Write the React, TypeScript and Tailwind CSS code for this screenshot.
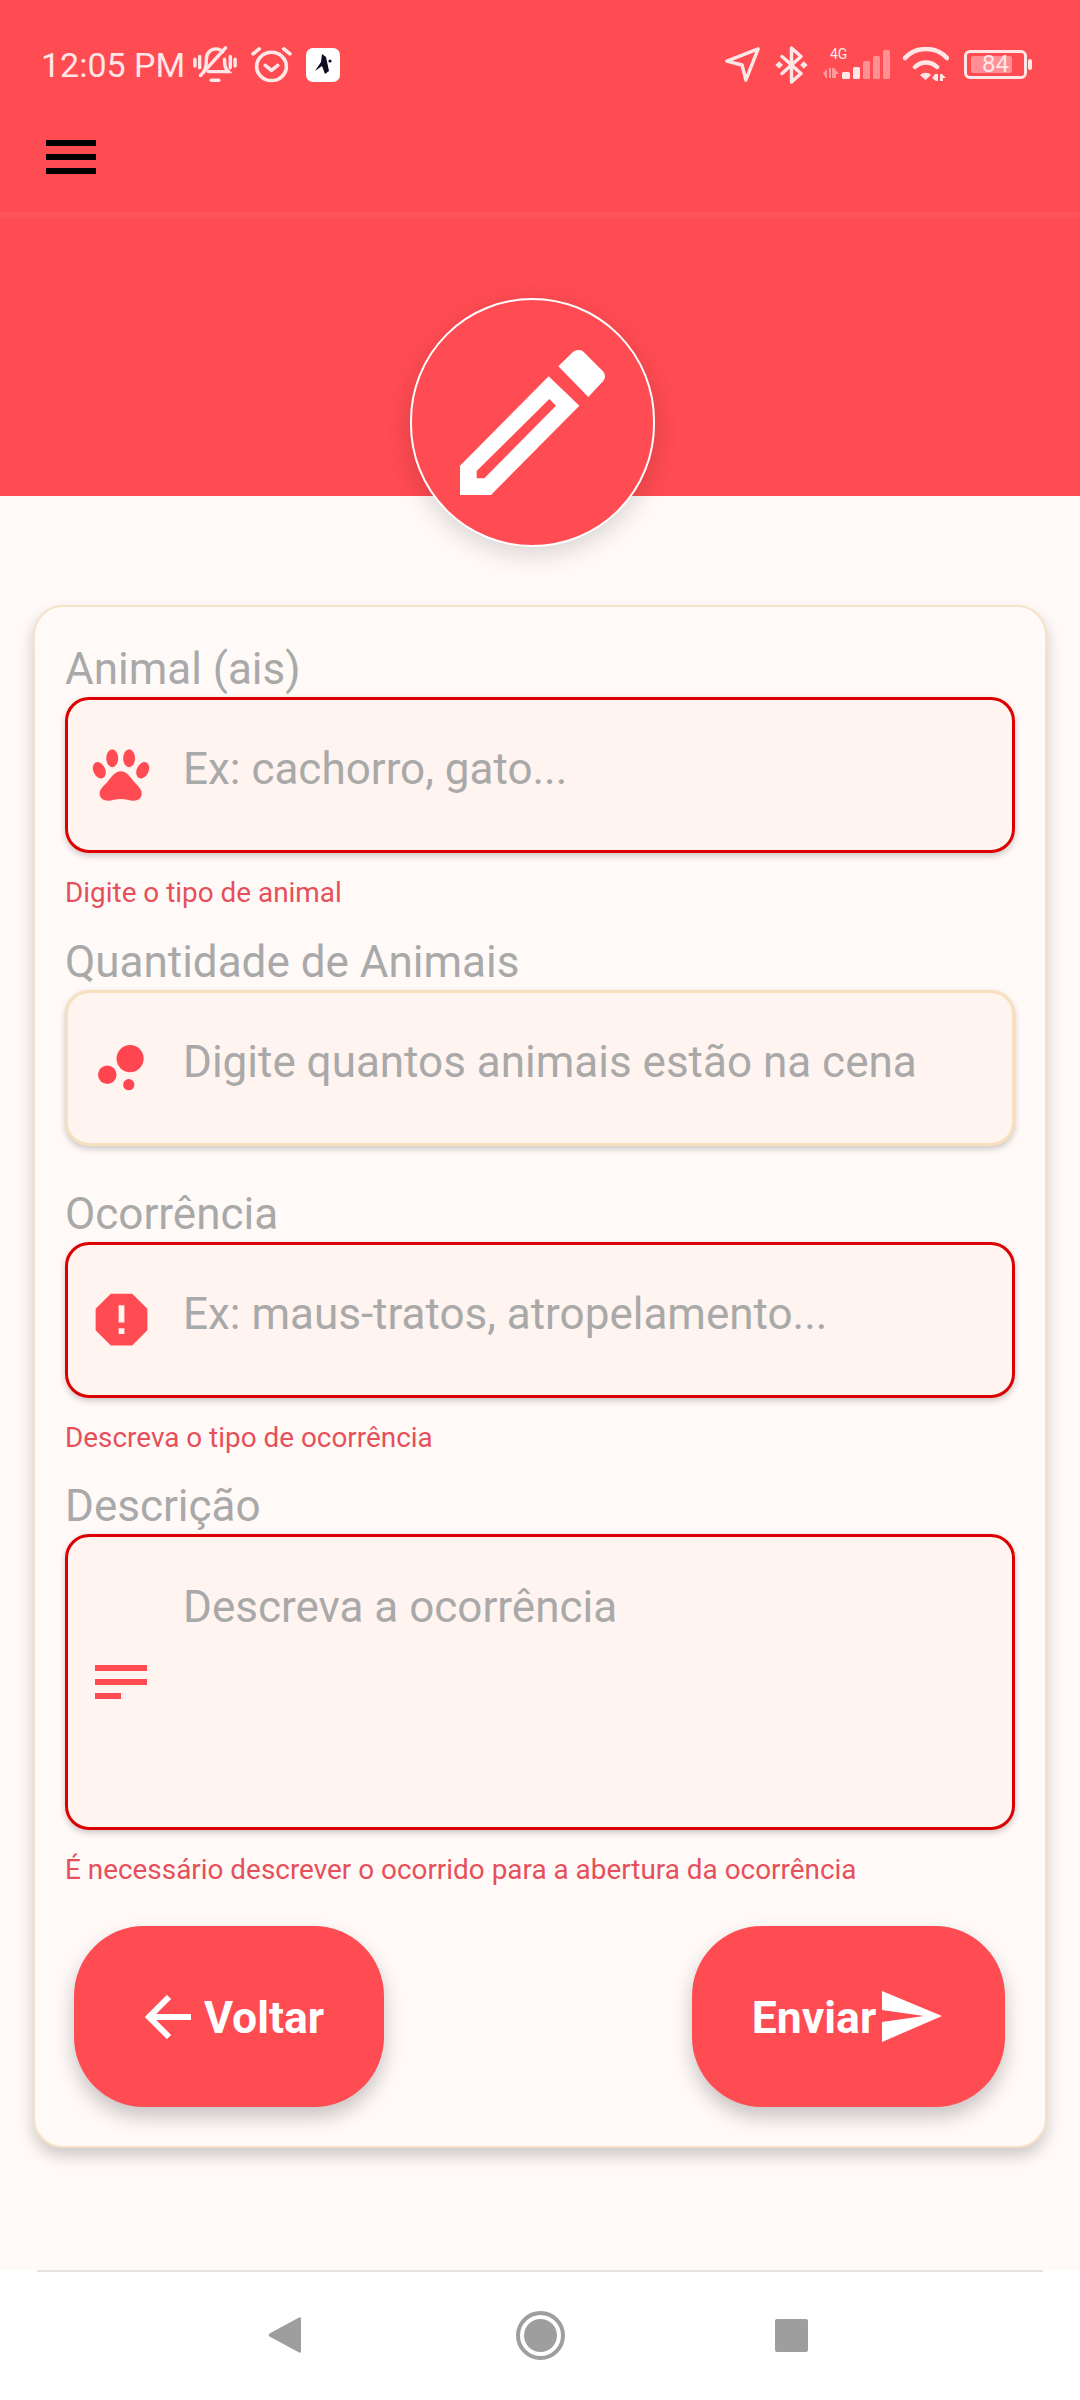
const RED = "#ff4b52";

function StatusBar() {
  return (
    <div className="flex h-[85px] items-center justify-between pl-[41px] pr-[48px] pt-[44px] text-[#ffe6e7]">
      <div className="flex items-center">
        <span className="w-[142px] whitespace-nowrap text-[34px] leading-[40px]">12:05 PM</span>
        <svg width="44" height="38" viewBox="0 0 46 40" className="ml-[10px]" preserveAspectRatio="none" fill="none" stroke="currentColor" strokeWidth="3.6" strokeLinecap="round">
          <path d="M2 14v7M7 11v12M39 11v12M44 14v7" />
          <path d="M11 27c3-3 3-8 3-13 0-6 4-11 10-11 3 0 5 1 7 3M33 14c0 5 0 9 4 13H16" />
          <path d="M34 2 8 31" />
          <path d="M19 36h8" />
        </svg>
        <svg width="41" height="37" viewBox="0 0 40 38" className="ml-[14px]" preserveAspectRatio="none" fill="none" stroke="currentColor" strokeWidth="3.6" strokeLinecap="round" strokeLinejoin="round">
          <circle cx="20" cy="21" r="14.5" />
          <path d="M14 20l6 5 6-5M2 8l6-5M38 8l-6-5" />
        </svg>
        <div className="ml-[14px] flex h-[34px] w-[34px] items-center justify-center rounded-[7px] bg-white">
          <svg width="22" height="24" viewBox="0 0 22 24" fill="#0d0d24">
            <path d="M10 1l4 3 3 14-4 3-3-8-7 5 6-9z" />
            <circle cx="18" cy="8" r="1.6" />
          </svg>
        </div>
      </div>
      <div className="flex items-center">
        <svg width="36" height="36" viewBox="0 0 38 38" fill="none" stroke="currentColor" strokeWidth="3.6" strokeLinejoin="round">
          <path d="M35 2 2 15l16 4 4 16z" />
        </svg>
        <svg width="35" height="38" viewBox="0 0 36 40" className="ml-[13px]" fill="none" stroke="currentColor" strokeWidth="3.6" strokeLinecap="round" strokeLinejoin="round">
          <path d="M8 11l20 18-10 9V2l10 9L8 29" />
          <path d="M1 20l4-4 4 4-4 4zM27 20l4-4 4 4-4 4z" fill="currentColor" stroke="none" />
        </svg>
        <div className="relative ml-[14px] h-[34px] w-[67px]">
          <span className="absolute left-[7px] top-[-1px] text-[14px] leading-[14px]">4G</span>
          <svg width="67" height="34" viewBox="0 0 67 34" fill="currentColor" className="absolute left-0 top-0">
            <path d="M0 25l4-4v9h-1zM6 20h2v10H6zM9 20h2l5 6h-3v4H9z" opacity=".5" />
            <rect x="19" y="24" width="8" height="7" rx="1.500" />
            <rect x="30" y="19" width="7" height="12" rx="1.500" />
            <rect x="40" y="13" width="7" height="18" rx="1.500" opacity=".45" />
            <rect x="50" y="8" width="7" height="23" rx="1.500" opacity=".45" />
            <rect x="60" y="2" width="7" height="29" rx="1.500" opacity=".45" />
          </svg>
        </div>
        <svg width="46" height="35" viewBox="0 0 46 35" className="ml-[13px]" fill="none" stroke="currentColor" strokeWidth="4.500" strokeLinecap="round">
          <path d="M2 11C13-1 33-1 44 11M12 20c6-6 16-6 22 0" />
          <path d="M17 28c4-3 8-3 11 0l-5.500 5zM32 27l3-0v7h-2l-4-3zM37 27h2l4 4h-3v3h-3z" fill="currentColor" stroke="none" />
        </svg>
        <div className="ml-[15px] flex items-center">
          <div className="flex h-[29px] w-[63px] items-center rounded-[6px] border-[3px] border-current px-[4px] py-[3px]">
            <div className="relative h-full w-[41px] rounded-[2px] bg-[#ff8f94]">
              <span className="absolute left-[11px] top-[-4px] text-[24px] leading-[24px]">84</span>
            </div>
          </div>
          <div className="ml-[1px] h-[11px] w-[4px] rounded-full bg-current" />
        </div>
      </div>
    </div>
  );
}

function Field({ label, placeholder, error, icon, tall }: { label: string; placeholder: string; error?: string; icon: React.ReactNode; tall?: boolean }) {
  return (
    <div className="flex flex-col">
      <label className="h-[52px] text-[44px] leading-[49px] text-[#a9a9a9]">{label}</label>
      <div
        className={`flex rounded-[24px] border-[3px] bg-[#fff4ef] shadow-[0_3px_6px_rgba(0,0,0,0.2)] ${
          error ? "border-[#dc0000]" : "border-[#f6e0bd]"
        } ${tall ? "h-[296px]" : "h-[156px]"}`}
      >
        <div className="flex w-[115px] shrink-0 items-center justify-center pr-[9px]">{icon}</div>
        <div className={`text-[44px] text-[#a9a9a9] ${tall ? "pt-[46px] leading-[48px]" : "flex items-center pb-[12px]"}`}>{placeholder}</div>
      </div>
      {error ? <p className="mb-[27.5px] mt-[23px] h-[34px] text-[27.9px] leading-[34px] text-[#e6505a]">{error}</p> : <div className="h-[44px]" />}
    </div>
  );
}

export default function App() {
  return (
    <div className="flex h-[2400px] w-[1080px] flex-col overflow-hidden bg-[#fffaf8] font-['Roboto',sans-serif]">
      <header className="relative h-[496px] shrink-0 bg-[#ff4b52]">
        <StatusBar />
        <div className="flex h-[133px] flex-col justify-between">
          <div className="ml-[46px] mt-[55px] flex w-[50px] flex-col gap-[8px]">
            <span className="h-[6px] bg-black" />
            <span className="h-[6px] bg-black" />
            <span className="h-[6px] bg-black" />
          </div>
          <div className="h-[6px] bg-[#ff535a]" />
        </div>
        <div className="absolute left-[410px] top-[298px] flex h-[249px] w-[245px] items-center justify-center rounded-full border-2 border-white bg-[#ff4b52] shadow-[0_8px_24px_rgba(0,0,0,0.15)]">
          <svg width="145" height="145" viewBox="237 243 435 435" fill="#fff">
            <path fillRule="evenodd" d="M237 590 503 322l92 88-265 268h-93zM287 606v22h23l215-218-20-20z" />
            <path d="M532 292l43-42c10-9 24-9 33-1l57 57c9 9 9 22 1 31l-44 47z" />
          </svg>
        </div>
      </header>

      <main className="flex-1 px-[33px] pt-[109px]">
        <div className="flex h-[1543px] flex-col rounded-[30px] border-2 border-[#f6e3c5] bg-[#fffaf8] px-[30px] pt-[38px] shadow-[0_8px_16px_rgba(0,0,0,0.2)]">
          <Field
            label="Animal (ais)"
            placeholder="Ex: cachorro, gato..."
            error="Digite o tipo de animal"
            icon={
              <svg width="58" height="52" viewBox="217 478 175 155" fill={RED}>
                <ellipse cx="278" cy="505" rx="18" ry="27" />
                <ellipse cx="329" cy="505" rx="18" ry="27" />
                <ellipse cx="239" cy="541" rx="18" ry="26" transform="rotate(-25 239 541)" />
                <ellipse cx="370" cy="541" rx="18" ry="26" transform="rotate(25 370 541)" />
                <path d="M304 544c18 0 29 18 40 32 8 10 23 20 23 36 0 14-12 21-24 21-14 0-24-5-39-5s-25 5-39 5c-12 0-25-7-25-21 0-16 16-26 24-36 11-14 22-32 40-32z" />
              </svg>
            }
          />
          <Field
            label="Quantidade de Animais"
            placeholder="Digite quantos animais estão na cena"
            icon={
              <svg width="46" height="46" viewBox="232 372 139 139" fill="#ff4550">
                <circle cx="329" cy="413" r="41" />
                <circle cx="260" cy="462" r="28" />
                <circle cx="325" cy="492" r="17" />
              </svg>
            }
          />
          <Field
            label="Ocorrência"
            placeholder="Ex: maus-tratos, atropelamento..."
            error="Descreva o tipo de ocorrência"
            icon={
              <svg width="69" height="69" viewBox="0 0 24 24" fill={RED}>
                <path d="M13 13h-2V7h2zM11 15h2v2h-2zM15.730 3H8.270L3 8.270v7.460L8.270 21h7.460L21 15.730V8.270z" fillRule="evenodd" />
              </svg>
            }
          />
          <Field
            label="Descrição"
            placeholder="Descreva a ocorrência"
            error="É necessário descrever o ocorrido para a abertura da ocorrência"
            tall
            icon={
              <svg width="52" height="34" viewBox="0 0 52 34" fill={RED}>
                <rect width="52" height="6" />
                <rect y="14" width="52" height="6" />
                <rect y="28" width="26" height="6" />
              </svg>
            }
          />
          <div className="mt-[11.5px] flex justify-between pl-[9px] pr-[10px]">
            <button className="flex h-[181px] w-[310px] items-center justify-start rounded-[70px] bg-[#ff4b52] pl-[71px] text-[44.5px] font-bold text-white shadow-[0_10px_20px_rgba(0,0,0,0.22)]">
              <svg width="46" height="44" viewBox="0 0 46 44" className="mr-[13px]" fill="none" stroke="#fff" strokeWidth="6">
                <path d="M46 22H5M24 2 4 22l20 20" />
              </svg>
              <span className="mt-[4px]">Voltar</span>
            </button>
            <button className="flex h-[181px] w-[313px] items-center justify-center rounded-[70px] bg-[#ff4b52] text-[44.5px] font-bold text-white shadow-[0_10px_20px_rgba(0,0,0,0.22)]">
              <span className="mt-[4px]">Enviar</span>
              <svg width="60" height="51" viewBox="0 0 60 51" className="ml-[6px] mr-[3px]" fill="#fff">
                <path d="M0 0l60 25L0 51V31l42-6L0 19z" />
              </svg>
            </button>
          </div>
        </div>
      </main>

      <nav className="h-[130px] shrink-0 bg-white px-[37px]">
        <div className="flex h-full items-center justify-between border-t-2 border-[#e5e4e2] pb-[2px] pl-[231px] pr-[235px]">
          <svg width="33" height="38" viewBox="0 0 33 38" fill="#9e9e9e">
            <path d="M31 1.500 1.500 17.500c-1 1-1 2 0 3L31 36.500c1 .5 2 0 2-1V2.500c0-1-1-1.500-2-1z" />
          </svg>
          <div className="ml-[4px] flex h-[49px] w-[49px] items-center justify-center rounded-full border-[4px] border-[#9e9e9e]">
            <div className="h-[33px] w-[33px] rounded-full bg-[#9e9e9e]" />
          </div>
          <div className="h-[33px] w-[33px] rounded-[2px] bg-[#9e9e9e]" />
        </div>
      </nav>
    </div>
  );
}
